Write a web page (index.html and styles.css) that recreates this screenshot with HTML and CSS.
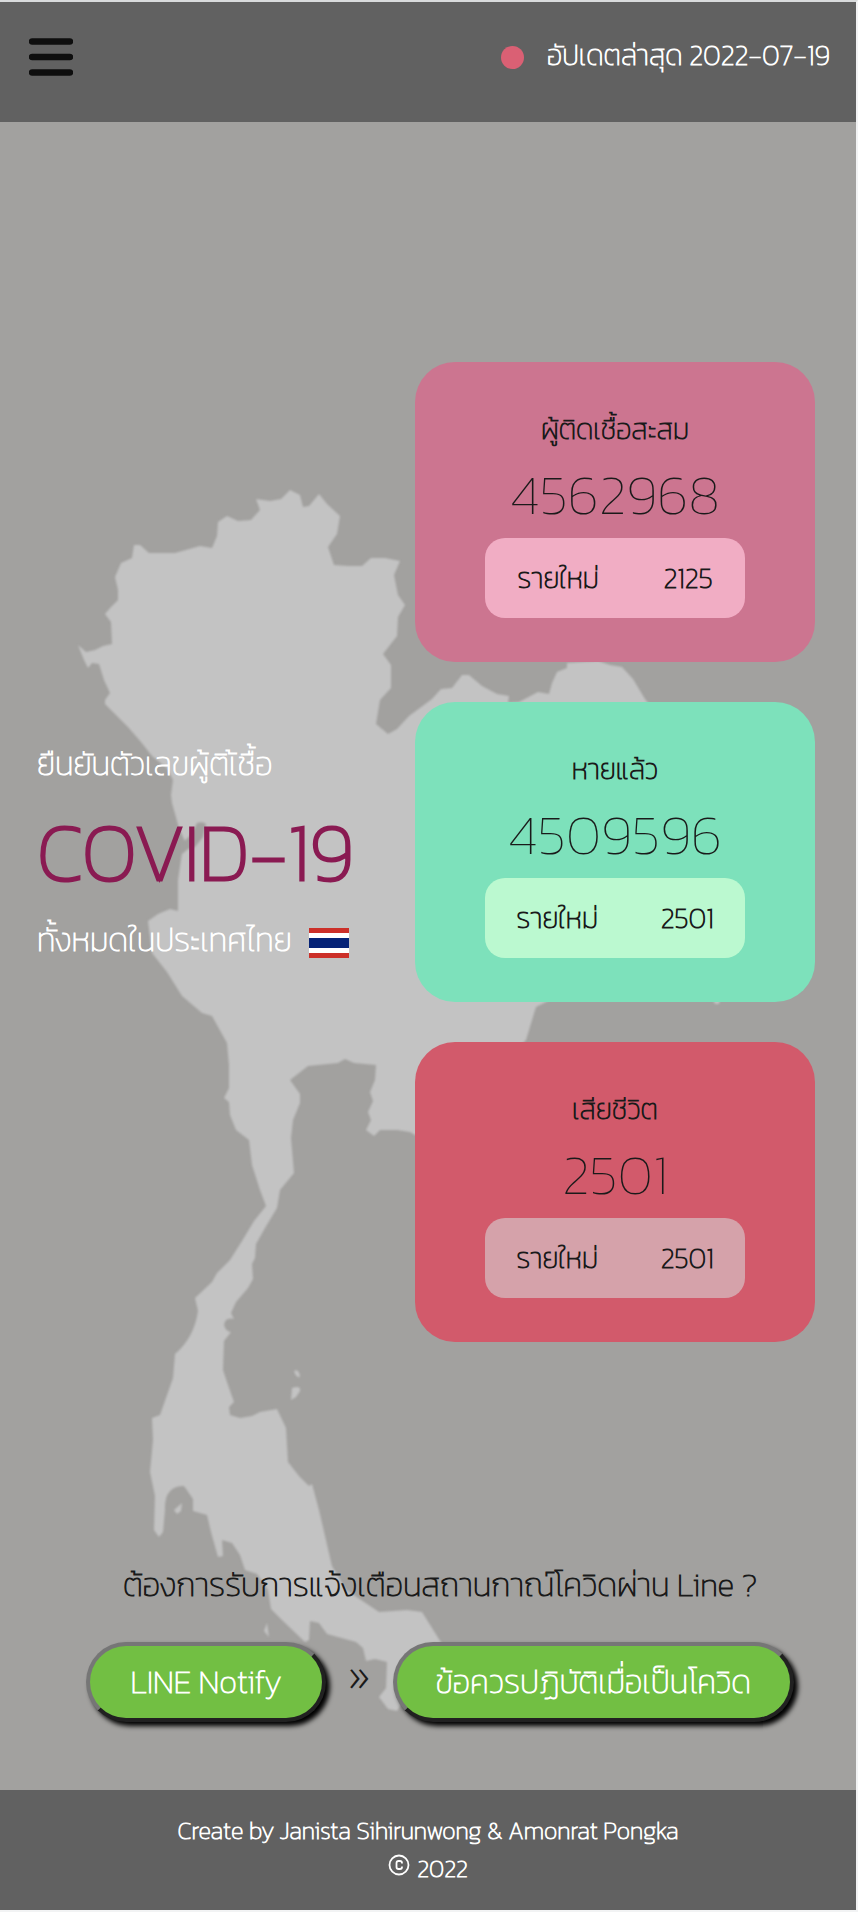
FILE: index.html
```html
<!DOCTYPE html>
<html lang="th">
<head>
<meta charset="utf-8">
<meta name="viewport" content="width=device-width, initial-scale=1">
<title>COVID-19</title>
<link rel="stylesheet" href="styles.css">
</head>
<body>
<div class="page">
  <header class="topbar">
    <button class="menu" type="button" aria-label="เมนู">
      <svg width="44" height="38" viewBox="0 0 44 38" aria-hidden="true"><path d="M3 3.500h38M3 19h38M3 34.500h38" fill="none" stroke="#0e0e0e" stroke-width="6.500" stroke-linecap="round"/></svg>
    </button>
    <p class="updated"><span class="dot"></span>อัปเดตล่าสุด 2022-07-19</p>
  </header>
  <main class="main">
    <svg class="map" width="858" height="1668" viewBox="0 122 858 1668" aria-hidden="true">
      <path d="M78 645L86 652L95 650L103 646L112 644L111 622L105 614L111 607L118 600L118 590L115 577L121 563L132 558L134 545L140 545L149 553L175 553L200 546L212 548L217 536L218 522L227 516L238 521L251 520L260 510L256 499L270 501L281 499L290 490L300 495L303 507L309 506L319 494L327 504L340 516L337 534L328 547L334 565L348 566L362 566L371 558L385 558L400 561L394 575L398 595L405 605L398 617L397 636L383 654L391 665L391 688L380 700L376 724L388 734L397 729L409 716L432 699L441 689L452 688L462 675L469 675L482 686L497 694L509 696L508 703L519 702L538 692L549 694L552 683L557 672L567 668L567 663L598 661L610 665L622 667L633 679L645 699L670 730L720 850L730 960L719 1004L715 1004L708 990L570 990L536 1007L526 1040L480 1090L470 1138L415 1135L410 1132L397 1130L380 1130L374 1136L366 1130L371 1120L368 1112L373 1101L370 1092L375 1080L376 1065L354 1063L345 1059L338 1063L308 1066L290 1080L300 1094L300 1103L293 1120L291 1138L294 1173L280 1190L277 1208L265 1228L256 1244L255 1258L252 1264L253 1279L248 1288L236 1302L231 1313L234 1319Q225 1317 224 1325Q226 1332 231 1332L224 1341L223 1370L228 1385L234 1402L229 1407L230 1415L240 1418L252 1416L260 1412L277 1409L286 1428L288 1462L299 1476L309 1486L312 1484L319 1510L332 1566L346 1590L379 1612L407 1610L422 1612L442 1644L460 1680L410 1690L397 1711L388 1709L379 1697L386 1688L387 1662L375 1659L366 1661L363 1648L356 1642L327 1634L319 1623L310 1621L309 1640L305 1642L284 1622L271 1609L268 1590L257 1574L245 1570L240 1555L232 1543L222 1540L223 1556L218 1557L211 1532L207 1515L193 1511L193 1499L184 1486Q164 1486 165 1510L163 1532L159 1537L154 1530L155 1496L150 1472L153 1440L152 1418L160 1415L173 1378L175 1354Q194 1338 198 1311L195 1298L212 1282L217 1273L230 1260L242 1241L254 1221L266 1206L260 1190L252 1165L249 1140L236 1130L230 1115L229 1102L224 1098L229 1088L229 1065L227 1043L212 1016L202 1013L182 996L167 972L152 953L148 921L158 914L170 909L178 911L178 880L182 853L187 846L179 828L172 803L171 795L173 780L167 768L152 756L141 742L128 727L115 714L105 704L105 700L110 693L104 680L99 664L92 663L88 668L84 660Z" fill="#c3c3c3"/>
      <path d="M182 843l9-8 6-12q6-2 9 1l-3 13-8 10-7 2-6 5z" fill="#a2a19f"/>
      <path d="M294 1371q5-3 6 6-4 1-6-6zM292 1388q9-3 8 3l-4 6-5 3zM174 1510l8-7-1 8-4 3zM267 1623l2 14-5-6z" fill="#c3c3c3"/>
    </svg>
    <section class="summary">
      <div class="intro">
        <p class="lead">ยืนยันตัวเลขผู้ติเ้ชื้อ</p>
        <h1 class="title">COVID-19</h1>
        <p class="lead country">ทั้งหมดในประเทศไทย
          <svg class="flag" width="40" height="30" viewBox="0 0 40 30" role="img" aria-label="ธงชาติไทย"><path fill="#cc3029" d="M0 0h40v30H0z"/><path fill="#fff" d="M0 5h40v20H0z"/><path fill="#062377" d="M0 10h40v10H0z"/></svg>
        </p>
      </div>
      <div class="cards">
        <article class="card cases">
          <h2 class="label">ผู้ติดเชื้อสะสม</h2>
          <p class="total">4562968</p>
          <p class="new"><span>รายใหม่</span><span>2125</span></p>
        </article>
        <article class="card healed">
          <h2 class="label">หายแล้ว</h2>
          <p class="total">4509596</p>
          <p class="new"><span>รายใหม่</span><span>2501</span></p>
        </article>
        <article class="card deaths">
          <h2 class="label">เสียชีวิต</h2>
          <p class="total">2501</p>
          <p class="new"><span>รายใหม่</span><span>2501</span></p>
        </article>
      </div>
    </section>
    <section class="notify">
      <p class="question">ต้องการรับการแจ้งเตือนสถานกาณ์โควิดผ่าน Line ?</p>
      <div class="actions">
        <button class="pill" type="button">LINE Notify</button>
        <span class="chevrons">»</span>
        <button class="pill" type="button">ข้อควรปฏิบัติเมื่อเป็นโควิด</button>
      </div>
    </section>
  </main>
  <footer class="footer">
    <p>Create by Janista Sihirunwong &amp; Amonrat Pongka</p>
    <p class="copyright"><svg class="mark" width="22" height="22" viewBox="0 0 22 22" role="img" aria-label="Copyright"><g fill="none" stroke="#fff" stroke-width="1.800"><circle cx="11" cy="11" r="9.500"/><path d="M14 9.500V9q0-2-2-2h-1.500q-2 0-2 2v4q0 2 2 2H12q2 0 2-2v-.5"/></g></svg>2022</p>
  </footer>
</div>
</body>
</html>
```
FILE: styles.css
```css
* {
  box-sizing: border-box;
}

body {
  margin: 0;
  font-family: "Kanit Thin", Kanit, "Open Sans", "Noto Sans", sans-serif;
  font-weight: 100;
  color: #1a1a1a;
  -webkit-text-stroke: 1px;
}

p,
h1,
h2 {
  margin: 0;
  font-weight: 100;
}

button {
  font: inherit;
  cursor: pointer;
}

.page {
  display: flex;
  flex-direction: column;
  min-height: 100vh;
  background: #a2a19f;
  border: solid #f2f3f4;
  border-width: 2px 2px 2px 0;
  border-top-color: #d9dbdc;
}

.topbar {
  display: flex;
  justify-content: space-between;
  align-items: flex-start;
  min-height: 120px;
  padding: 31px 26px 0 29px;
  background: #616161;
}

.menu {
  display: flex;
  padding: 5px 0;
  background: none;
  border: 0;
}

.updated {
  display: flex;
  align-items: center;
  gap: 23px;
  font-size: 28px;
  line-height: 44px;
  color: #fff;
}

.dot {
  width: 23px;
  height: 23px;
  margin-top: 4px;
  border-radius: 50%;
  background: #da6074;
}

.main {
  position: relative;
  flex: 1;
  padding: 240px 0 68px;
}

.map {
  position: absolute;
  top: 0;
  left: 0;
  filter: blur(1px);
}

.summary {
  position: relative;
  display: flex;
  justify-content: space-between;
  align-items: center;
  padding: 0 41px 0 37px;
}

.lead {
  font-size: 32px;
  line-height: 48px;
  color: #fff;
}

.title {
  font-size: 80px;
  line-height: 128px;
  color: #8a1a52;
  -webkit-text-stroke: 3px;
}

.country {
  display: flex;
  align-items: center;
  gap: 17px;
}

.flag {
  margin-top: 6px;
}

.cards {
  display: grid;
  gap: 40px;
  width: 400px;
}

.card {
  display: flex;
  flex-direction: column;
  align-items: center;
  min-height: 300px;
  padding: 46px 0 44px;
  border-radius: 40px;
}

.label {
  font-size: 28px;
  line-height: 42px;
}

.total {
  font-size: 56px;
  line-height: 88px;
  -webkit-text-stroke: 0;
}

.new {
  display: flex;
  justify-content: space-around;
  align-items: center;
  width: 260px;
  height: 80px;
  border-radius: 20px;
  font-size: 28px;
}

.cases { background: #cc7590; }
.cases .new { background: #f1adc4; }
.healed { background: #7de1bb; }
.healed .new { background: #bbf9d0; }
.deaths { background: #d25a6b; }
.deaths .new { background: #d5a2aa; }

.notify {
  position: relative;
  padding: 220px 62px 0 86px;
}

.question {
  font-size: 32px;
  line-height: 46px;
  text-align: center;
}

.actions {
  display: flex;
  justify-content: space-between;
  align-items: center;
  margin-top: 34px;
}

.pill {
  min-width: 240px;
  height: 80px;
  padding: 0 39px;
  border: 4px solid;
  border-color: #767676 #212121 #212121 #767676;
  border-radius: 40px;
  background: #72bf43;
  box-shadow: 4px 4px 5px #000;
  font-size: 32px;
  color: #fff;
}

.chevrons {
  font-family: "Open Sans", sans-serif;
  font-size: 48px;
  font-weight: 300;
  line-height: 64px;
  padding-bottom: 16px;
  -webkit-text-stroke: 0;
}

.footer {
  min-height: 120px;
  padding-top: 22px;
  background: #616161;
  text-align: center;
  font-size: 24px;
  line-height: 38px;
  color: #fff;
}

.copyright {
  display: flex;
  justify-content: center;
  align-items: flex-start;
  gap: 7px;
}

.mark {
  margin-top: 4px;
}
```
